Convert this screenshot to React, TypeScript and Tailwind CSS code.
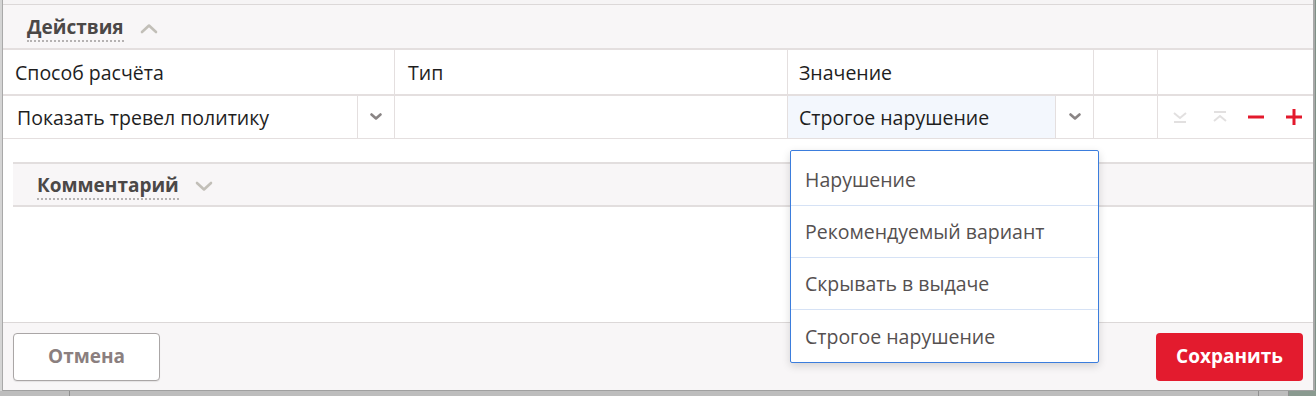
import React from "react";

const font = { fontFamily: '"Open Sans", "Noto Sans", sans-serif' };

const ChevronSmall = () => (
  <svg width="12" height="8" viewBox="0 0 12 8">
    <path d="M1.5 1.5 L6 5.5 L10.5 1.5" fill="none" stroke="#8a8585" strokeWidth="2.6" strokeLinecap="round" strokeLinejoin="round" />
  </svg>
);

const SectionChevron = ({ up }: { up?: boolean }) => (
  <svg width="18" height="11" viewBox="0 0 18 11">
    <path
      d={up ? "M2 9 L9 2.5 L16 9" : "M2 2 L9 8.5 L16 2"}
      fill="none"
      stroke="#c2bfb8"
      strokeWidth="2.6"
      strokeLinecap="round"
      strokeLinejoin="round"
    />
  </svg>
);

const MoveDown = () => (
  <svg width="16" height="16" viewBox="0 0 16 16">
    <path d="M2 4 L8 9 L14 4" fill="none" stroke="#e2e0e0" strokeWidth="2" />
    <path d="M2 13 H14" stroke="#e2e0e0" strokeWidth="2" />
  </svg>
);

const MoveUp = () => (
  <svg width="16" height="16" viewBox="0 0 16 16">
    <path d="M2 3 H14" stroke="#e2e0e0" strokeWidth="2" />
    <path d="M2 12 L8 7 L14 12" fill="none" stroke="#e2e0e0" strokeWidth="2" />
  </svg>
);

const Section = ({ title, up }: { title: string; up?: boolean }) => (
  <div className="flex items-center gap-[16px] h-full pt-[5px]">
    <span className="text-[19px] font-bold text-[#4b4847] leading-[23px] border-b-2 border-dotted border-[#b5b2b2] pb-[1px]">
      {title}
    </span>
    <div className="-mt-[2px]">
      <SectionChevron up={up} />
    </div>
  </div>
);

const options = ["Нарушение", "Рекомендуемый вариант", "Скрывать в выдаче", "Строгое нарушение"];

export default function App() {
  return (
    <div className="relative w-[1316px] h-[396px] overflow-hidden bg-[#b9b9b9] flex flex-col" style={font}>
      <div className="flex h-[391px]">
        <div className="w-[2px] bg-[#d4d4d4]" />
        <div className="flex-1 flex flex-col bg-white border-l border-[#a9a9a9] border-r-2 border-r-[#a8a8a8] border-b border-b-[#a0a0a0]">
          <div className="h-[4px] bg-[#f6f4f5] border-b border-[#dcd8d8] box-content" />
          <div className="h-[43px] bg-[#f8f6f7] pl-[24px]">
            <Section title="Действия" up />
          </div>

          <div className="border-t-2 border-[#e4dfdf] text-[19.5px] text-[#1e1e1e]">
            <div className="flex h-[46px] border-b-2 border-[#e4dfdf]">
              <div className="w-[392px] border-r border-[#e4dfdf] flex items-center pl-[12px] pt-[1px]">Способ расчёта</div>
              <div className="w-[393px] border-r border-[#e4dfdf] flex items-center pl-[13px] pt-[1px]">Тип</div>
              <div className="w-[306px] border-r border-[#e4dfdf] flex items-center pl-[11px] pt-[1px]">Значение</div>
              <div className="w-[64px] border-r border-[#e4dfdf]" />
              <div className="flex-1" />
            </div>
            <div className="flex h-[43px] border-b border-[#e4dfdf]">
              <div className="w-[392px] border-r border-[#e4dfdf] flex">
                <div className="flex-1 flex items-center pl-[14px] pt-[2px] border-r border-[#e4dfdf]">Показать тревел политику</div>
                <div className="w-[36px] flex items-center justify-center">
                  <ChevronSmall />
                </div>
              </div>
              <div className="w-[393px] border-r border-[#e4dfdf]" />
              <div className="w-[306px] border-r border-[#e4dfdf] flex">
                <div className="flex-1 flex items-center pl-[11px] pt-[2px] bg-[#f3f7fd] border-r border-[#e4dfdf]">Строгое нарушение</div>
                <div className="w-[37px] flex items-center justify-center">
                  <ChevronSmall />
                </div>
              </div>
              <div className="w-[64px] border-r border-[#e4dfdf]" />
              <div className="flex-1 flex items-center pl-[14px]">
                <MoveDown />
                <div className="ml-[24px]">
                  <MoveUp />
                </div>
                <svg className="ml-[19px]" width="18" height="16" viewBox="0 0 18 16">
                  <path d="M1 8 H17" stroke="#e3192c" strokeWidth="3" />
                </svg>
                <svg className="ml-[21px]" width="16" height="16" viewBox="0 0 16 16">
                  <path d="M0 8 H16 M8 0 V16" stroke="#e3192c" strokeWidth="3" />
                </svg>
              </div>
            </div>
          </div>

          <div className="h-[23px]" />
          <div className="ml-[10px] h-[45px] bg-[#f8f6f7] border-y-2 border-[#e2dede] pl-[24px]">
            <Section title="Комментарий" />
          </div>

          <div className="flex-1" />
          <div className="h-[68px] bg-[#f8f6f7] border-t border-[#dcd8d8] flex items-center justify-between pl-[10px] pr-[10px]">
            <button className="w-[147px] h-[48px] bg-white border border-[#aaa6a6] rounded-[4px] text-[19px] font-bold text-[#8b7f7f] shadow-[0_1px_1px_rgba(0,0,0,0.08)]">
              Отмена
            </button>
            <button className="w-[147px] h-[48px] bg-[#e31b2e] rounded-[4px] text-[19px] font-bold text-white">
              Сохранить
            </button>
          </div>
        </div>
        <div className="w-[1px] bg-[#7f9086]" />
      </div>
      <div className="flex-1 flex bg-[#bdbdbd]">
        <div className="w-[70px] border-r border-[#8f8f8f]" />
        <div className="flex-1" />
        <div className="w-[30px] border-l border-[#8f8f8f]" />
        <div className="w-[28px] border-l border-[#8f8f8f] bg-[#8a9a90]" />
      </div>

      <div className="absolute left-[790px] top-[150px] w-[309px] pt-[3px] bg-white border border-[#3b7ddd] rounded-[2px] shadow-[0_3px_8px_rgba(0,0,0,0.15)] text-[19.5px] text-[#555050]">
        {options.map((o, i) => (
          <div
            key={o}
            className={`h-[52px] flex items-center pl-[14px] pt-[1px] ${i < options.length - 1 ? "border-b border-[#d6e2f5]" : ""}`}
          >
            {o}
          </div>
        ))}
      </div>
    </div>
  );
}
